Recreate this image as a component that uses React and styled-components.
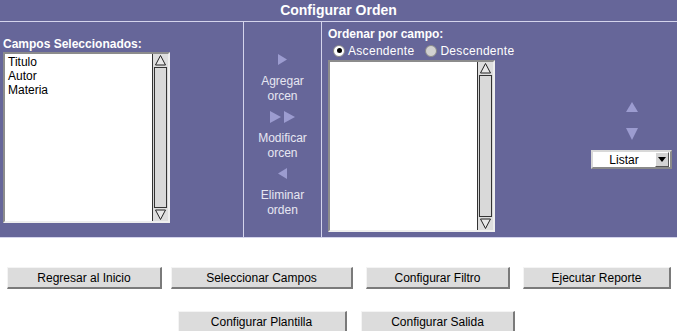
import React from 'react';
import styled, { createGlobalStyle } from 'styled-components';

const GlobalStyle = createGlobalStyle`
  html, body {
    margin: 0;
    padding: 0;
    background: #ffffff;
    font-family: "Liberation Sans", Arial, sans-serif;
    font-size: 12px;
  }
`;

const Panel = styled.div`
  background-color: #666699;
  border-bottom: 1px solid #d4d4ec;
`;

const Header = styled.div`
  height: 21px;
  line-height: 20px;
  border-bottom: 1px solid #d4d4ec;
  color: #ffffff;
  font-weight: bold;
  font-size: 14px;
  text-align: center;
`;

const Body = styled.div`
  display: grid;
  grid-template-columns: 244px 78px 1fr;
  height: 215px;
`;

const Column = styled.div`
  display: flex;
  flex-direction: column;
  justify-content: center;
  padding-left: ${(p) => p.$pad || 0}px;
  border-right: ${(p) => (p.$divider ? '1px solid #d4d4ec' : 'none')};
`;

const Label = styled.div`
  color: #ffffff;
  font-weight: bold;
  font-size: 12px;
  line-height: 14px;
  margin-bottom: ${(p) => p.$gap || 0}px;
`;

const ListBox = styled.div`
  display: flex;
  width: ${(p) => p.$w}px;
  height: ${(p) => p.$h}px;
  box-sizing: border-box;
  border-top: 2px solid #8c8c8c;
  border-left: 2px solid #8c8c8c;
  border-right: 2px solid #eeeeee;
  border-bottom: 2px solid #eeeeee;
  background: #ffffff;
`;

const Items = styled.div`
  flex: 1;
  padding: 1px 0 0 3px;
  color: #000000;
  font-size: 12px;
  line-height: 14px;
`;

const ScrollBar = styled.div`
  width: 15px;
  display: flex;
  flex-direction: column;
  background: #d6d6d6;
  border-left: 1px solid #333333;
`;

const ScrollButton = styled.div`
  height: 13px;
  display: flex;
  align-items: center;
  justify-content: center;
  background: #dedede;
`;

const Thumb = styled.div`
  flex: 1;
  margin: 0 1px;
  border: 1px solid #333333;
  background: #d9d9d9;
`;

const Actions = styled.div`
  display: flex;
  flex-direction: column;
  align-items: center;
  justify-content: center;
  padding-top: 12px;
  color: #e6e6f2;
  font-size: 12px;
  line-height: 15px;
  text-align: center;
`;

const Action = styled.div`
  display: flex;
  flex-direction: column;
  align-items: center;
  margin-bottom: ${(p) => (p.$last ? 0 : 7)}px;
`;

const ArrowIcon = styled.svg`
  display: block;
  margin-bottom: 8px;
`;

const RightArea = styled.div`
  display: flex;
  align-items: center;
`;

const SortBlock = styled.div`
  display: flex;
  flex-direction: column;
  padding-left: 6px;
`;

const RadioRow = styled.div`
  display: flex;
  align-items: center;
  height: 19px;
  color: #ffffff;
  font-size: 12px;
  letter-spacing: 0.3px;
`;

const RadioItem = styled.label`
  display: flex;
  align-items: center;
  gap: 3px;
  margin-left: ${(p) => (p.$first ? 5 : 11)}px;
`;

const RadioDot = styled.span`
  width: 12px;
  height: 12px;
  border-radius: 50%;
  box-sizing: border-box;
  background: ${(p) => (p.$on ? '#ffffff' : '#d0d0d0')};
  border: 1px solid #888;
  display: flex;
  align-items: center;
  justify-content: center;
  &::after {
    content: '';
    width: 5px;
    height: 5px;
    border-radius: 50%;
    background: ${(p) => (p.$on ? '#000000' : 'transparent')};
  }
`;

const MoveGroup = styled.div`
  margin-left: auto;
  margin-right: 5px;
  width: 81px;
  display: flex;
  flex-direction: column;
  align-items: center;
  padding-top: 12px;
`;

const Select = styled.div`
  margin-top: 10px;
  width: 81px;
  height: 19px;
  box-sizing: border-box;
  display: flex;
  align-items: center;
  background: #ffffff;
  border-top: 2px solid #d8d8d8;
  border-left: 2px solid #d8d8d8;
  border-right: 2px solid #8a8a8a;
  border-bottom: 2px solid #8a8a8a;
`;

const SelectText = styled.span`
  flex: 1;
  text-align: center;
  font-size: 12px;
  color: #000;
`;

const SelectButton = styled.span`
  width: 12px;
  height: 13px;
  margin-right: 1px;
  display: flex;
  align-items: center;
  justify-content: center;
  background: #d4d4d4;
  border-top: 1px solid #fff;
  border-left: 1px solid #fff;
  border-right: 1px solid #555;
  border-bottom: 1px solid #555;
`;

const ButtonGrid = styled.div`
  display: grid;
  grid-template-columns: 169px 186px 166px 152px;
  justify-items: center;
  row-gap: 22px;
  padding-top: 29px;
`;

const NavButton = styled.button`
  grid-column: ${(p) => p.$col};
  width: ${(p) => p.$w}px;
  height: 22px;
  padding: 0;
  box-sizing: border-box;
  background: #dcdcdc;
  border-top: 1px solid #f4f4f4;
  border-left: 1px solid #f4f4f4;
  border-right: 2px solid #7a7a7a;
  border-bottom: 2px solid #7a7a7a;
  font-family: "Liberation Sans", Arial, sans-serif;
  font-size: 12px;
  color: #000;
  cursor: pointer;
`;

const ARROW = '#9c9cd0';

function Tri({ dir }) {
  const pts = {
    right: '0,0 9,5.5 0,11',
    left: '9,0 0,5.5 9,11',
  };
  return (
    <ArrowIcon width="9" height="12" viewBox="0 0 9 12">
      <polygon points={pts[dir]} fill={ARROW} />
    </ArrowIcon>
  );
}

function DoubleRight() {
  return (
    <ArrowIcon width="26" height="12" viewBox="0 0 26 12">
      <polygon points="0,0 11,6 0,12" fill={ARROW} />
      <polygon points="14,0 25,6 14,12" fill={ARROW} />
    </ArrowIcon>
  );
}

function Scroll() {
  return (
    <ScrollBar>
      <ScrollButton>
        <svg width="11" height="11" viewBox="0 0 11 11">
          <polygon points="5.5,0.5 10.5,10 0.5,10" fill="#e8e8e8" stroke="#222" strokeWidth="1" />
        </svg>
      </ScrollButton>
      <Thumb />
      <ScrollButton>
        <svg width="11" height="11" viewBox="0 0 11 11">
          <polygon points="0.5,1 10.5,1 5.5,10.5" fill="#e8e8e8" stroke="#222" strokeWidth="1" />
        </svg>
      </ScrollButton>
    </ScrollBar>
  );
}

function App() {
  return (
    <>
      <GlobalStyle />
      <Panel>
        <Header>Configurar Orden</Header>
        <Body>
          <Column $divider $pad={3}>
            <Label $gap={1}>Campos Seleccionados:</Label>
            <ListBox $w={167} $h={171}>
              <Items>
                <div>Titulo</div>
                <div>Autor</div>
                <div>Materia</div>
              </Items>
              <Scroll />
            </ListBox>
          </Column>
          <Column $divider>
            <Actions>
              <Action>
                <Tri dir="right" />
                <div>Agregar<br />orcen</div>
              </Action>
              <Action>
                <DoubleRight />
                <div>Modificar<br />orcen</div>
              </Action>
              <Action $last>
                <Tri dir="left" />
                <div>Eliminar<br />orden</div>
              </Action>
            </Actions>
          </Column>
          <RightArea>
            <SortBlock>
              <Label>Ordenar por campo:</Label>
              <RadioRow>
                <RadioItem $first><RadioDot $on />Ascendente</RadioItem>
                <RadioItem><RadioDot />Descendente</RadioItem>
              </RadioRow>
              <ListBox $w={167} $h={172}>
                <Items />
                <Scroll />
              </ListBox>
            </SortBlock>
            <MoveGroup>
              <svg width="12" height="10" viewBox="0 0 12 10">
                <polygon points="6,0 12,10 0,10" fill={ARROW} />
              </svg>
              <svg width="12" height="12" viewBox="0 0 12 12" style={{ marginTop: 16 }}>
                <polygon points="0,0 12,0 6,12" fill={ARROW} />
              </svg>
              <Select>
                <SelectText>Listar</SelectText>
                <SelectButton>
                  <svg width="8" height="5" viewBox="0 0 8 5">
                    <polygon points="0,0 8,0 4,5" fill="#000" />
                  </svg>
                </SelectButton>
              </Select>
            </MoveGroup>
          </RightArea>
        </Body>
      </Panel>
      <ButtonGrid>
        <NavButton $col={1} $w={155}>Regresar al Inicio</NavButton>
        <NavButton $col={2} $w={182}>Seleccionar Campos</NavButton>
        <NavButton $col={3} $w={144}>Configurar Filtro</NavButton>
        <NavButton $col={4} $w={148}>Ejecutar Reporte</NavButton>
        <NavButton $col={2} $w={169}>Configurar Plantilla</NavButton>
        <NavButton $col={3} $w={154}>Configurar Salida</NavButton>
      </ButtonGrid>
    </>
  );
}

export default App;
